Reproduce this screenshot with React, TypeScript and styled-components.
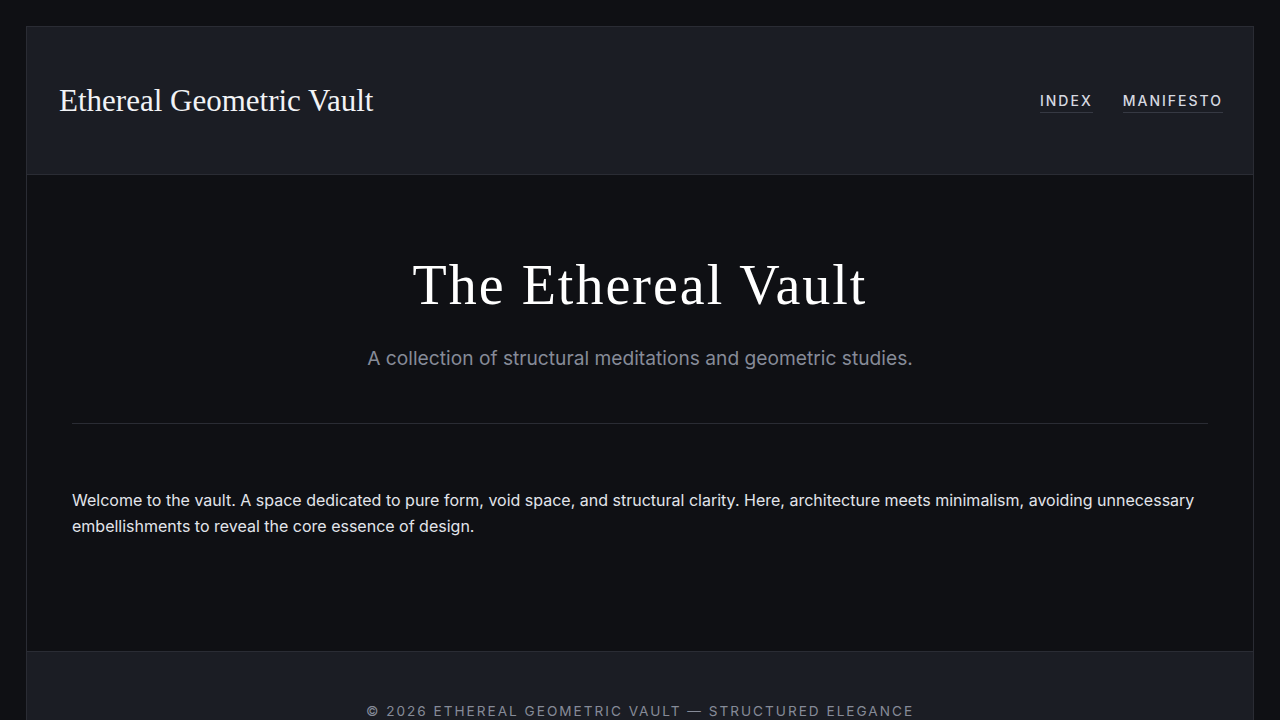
import { createGlobalStyle, styled } from "styled-components";

const GlobalStyle = createGlobalStyle`
    * { box-sizing: border-box; }
    html, body {
        margin: 0;
        padding: 0;
        background-color: #0f1014;
        color: #e4e6eb;
        font-family: "Inter", "Liberation Sans", sans-serif;
    }
`;

const App = () => {
    return (
        <>
            <GlobalStyle />
            <Page>
                <Frame>
                    <Header>
                        <Logo>Ethereal Geometric Vault</Logo>
                        <Nav>
                            <li><a href="#">Index</a></li>
                            <li><a href="#">Manifesto</a></li>
                        </Nav>
                    </Header>
                    <Main>
                        <Hero>
                            <Title>The Ethereal Vault</Title>
                            <Subtitle>A collection of structural meditations and geometric studies.</Subtitle>
                        </Hero>
                        <Divider />
                        <Body>
                            Welcome to the vault. A space dedicated to pure form, void space, and structural clarity. Here, architecture meets minimalism, avoiding unnecessary embellishments to reveal the core essence of design.
                        </Body>
                    </Main>
                    <Footer>
                        © 2026 Ethereal Geometric Vault — Structured Elegance
                    </Footer>
                </Frame>
            </Page>
        </>
    );
};

const Page = styled.div`
    padding: 26px;
    min-height: 100vh;
`;

const Frame = styled.div`
    border: 1px solid #2a2c34;
    background-color: #0f1014;
`;

const Header = styled.header`
    display: flex;
    justify-content: space-between;
    align-items: center;
    height: 148px;
    padding: 0 32px;
    background-color: #1b1d24;
    border-bottom: 1px solid #2a2c34;
`;

const Logo = styled.div`
    font-family: "Liberation Serif", "DejaVu Serif", serif;
    font-size: 31px;
    color: #f2f3f6;
`;

const Nav = styled.ul`
    display: flex;
    gap: 32px;
    list-style: none;
    margin: 0;
    padding: 3px 0 0;

    & li a {
        display: block;
        font-size: 14px;
        font-weight: 500;
        letter-spacing: 2px;
        margin-right: -2px;
        text-transform: uppercase;
        text-decoration: none;
        color: #d6d9e0;
        padding-bottom: 3px;
        border-bottom: 1px solid #363943;
    }
`;

const Main = styled.main`
    padding: 77px 45px 112px;
`;

const Hero = styled.section`
    text-align: center;
`;

const Title = styled.h1`
    margin: 0;
    font-family: "Liberation Serif", "DejaVu Serif", serif;
    font-weight: 400;
    font-size: 56px;
    line-height: 1.2;
    letter-spacing: 2px;
    color: #ffffff;
`;

const Subtitle = styled.p`
    margin: 26px 0 0;
    font-size: 19.2px;
    line-height: 27px;
    color: #868b98;
`;

const Divider = styled.hr`
    margin: 51px 0 0;
    border: none;
    border-top: 1px solid #2a2c34;
`;

const Body = styled.p`
    margin: 63px 0 0;
    font-size: 16px;
    line-height: 26px;
    color: #e2e5eb;
`;

const Footer = styled.footer`
    padding: 51px 32px 40px;
    text-align: center;
    background-color: #1b1d24;
    border-top: 1px solid #2a2c34;
    font-size: 13.6px;
    letter-spacing: 2px;
    text-transform: uppercase;
    color: #868b98;
`;

export default App;
